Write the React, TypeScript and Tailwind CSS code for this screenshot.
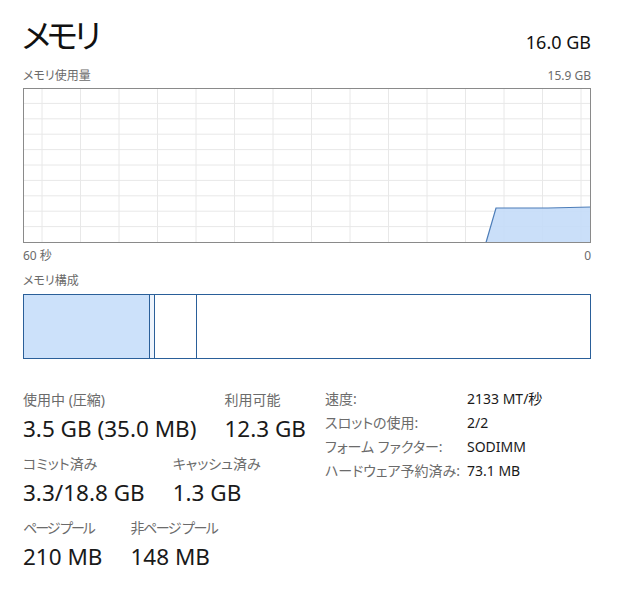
import React from 'react';

const vLines = Array.from({ length: 15 }, (_, i) => 19 + i * 38.5);
const hLines = Array.from({ length: 9 }, (_, i) => (i + 1) * 15.4);

function UsageChart() {
  return (
    <svg width="568" height="155" viewBox="0 0 568 155" className="block">
      <rect x="0" y="0" width="568" height="155" fill="#ffffff" />
      {vLines.map((x) => (
        <line key={x} x1={x} y1="0" x2={x} y2="155" stroke="#e8e8e8" strokeWidth="1" />
      ))}
      {hLines.map((y) => (
        <line key={y} x1="0" y1={y} x2="568" y2={y} stroke="#e8e8e8" strokeWidth="1" />
      ))}
      <polygon points="463,154.5 473,120 525,120 568,119 568,154.5" fill="#c4dbf8" fillOpacity="0.9" />
      <polyline points="463,154.5 473,120 525,120 568,119" fill="none" stroke="#4d7db8" strokeWidth="1.2" />
      <rect x="0.5" y="0.5" width="567" height="154" fill="none" stroke="#8a8a8a" strokeWidth="1" />
    </svg>
  );
}

function Stat({ label, value, tight = '' }: { label: string; value: string; tight?: string }) {
  return (
    <div className="flex flex-col">
      <div className={`text-[14px] leading-5 text-[#6b6b6b] whitespace-nowrap ${tight}`}>{label}</div>
      <div className="mt-[4px] text-[22.5px] leading-[30px] text-[#1a1a1a] whitespace-nowrap">{value}</div>
    </div>
  );
}

const details = [
  ['速度:', '2133 MT/秒'],
  ['スロットの使用:', '2/2'],
  ['フォーム ファクター:', 'SODIMM'],
  ['ハードウェア予約済み:', '73.1 MB'],
];

export default function App() {
  return (
    <div className="w-[620px] h-[599px] bg-white overflow-hidden font-['Noto_Sans','Noto_Sans_CJK_JP',sans-serif] [font-feature-settings:'palt'] text-[#1a1a1a]">
      <div className="w-[568px] ml-[23px] pt-[16px]">
        <div className="flex items-end justify-between">
          <div className="text-[33px] leading-[40px] tracking-[-4px] text-[#111] -ml-[1px]">メモリ</div>
          <div className="text-[18px] leading-6 mb-[2px] text-[#111]">16.0 GB</div>
        </div>
        <div className="flex justify-between text-[12px] leading-4 text-[#6b6b6b] mt-[12px]">
          <span>メモリ使用量</span>
          <span>15.9 GB</span>
        </div>
        <div className="mt-[4px]">
          <UsageChart />
        </div>
        <div className="flex justify-between text-[12px] leading-4 text-[#6b6b6b] mt-[5px]">
          <span>60 秒</span>
          <span>0</span>
        </div>
        <div className="text-[12px] leading-4 text-[#6b6b6b] mt-[9px]">メモリ構成</div>
        <div className="mt-[5px] flex h-[65px] border border-[#2a5f99]">
          <div className="w-[126px] bg-[#cce1fa] border-r border-[#2a5f99]" />
          <div className="w-[5px] bg-[#eef4fc] border-r border-[#2a5f99]" />
          <div className="w-[42px] border-r border-[#2a5f99]" />
          <div className="flex-1" />
        </div>
        <div className="mt-[31px] flex items-start">
          <div className="w-[302px] flex flex-col gap-[10px]">
            <div className="flex gap-[28px]">
              <Stat label="使用中 (圧縮)" value="3.5 GB (35.0 MB)" />
              <Stat label="利用可能" value="12.3 GB" />
            </div>
            <div className="flex gap-[28px]">
              <Stat label="コミット済み" value="3.3/18.8 GB" />
              <Stat label="キャッシュ済み" value="1.3 GB" />
            </div>
            <div className="flex gap-[28px]">
              <Stat label="ページ プール" value="210 MB" tight="tracking-[-2px]" />
              <Stat label="非ページ プール" value="148 MB" tight="tracking-[-1.5px]" />
            </div>
          </div>
          <div className="grid grid-cols-[142px_auto] content-start -mt-[3px] text-[14px] leading-6">
            {details.map(([k, v]) => (
              <React.Fragment key={k}>
                <div className="text-[#6b6b6b] whitespace-nowrap">{k}</div>
                <div className="text-[#1a1a1a] whitespace-nowrap">{v}</div>
              </React.Fragment>
            ))}
          </div>
        </div>
      </div>
    </div>
  );
}
